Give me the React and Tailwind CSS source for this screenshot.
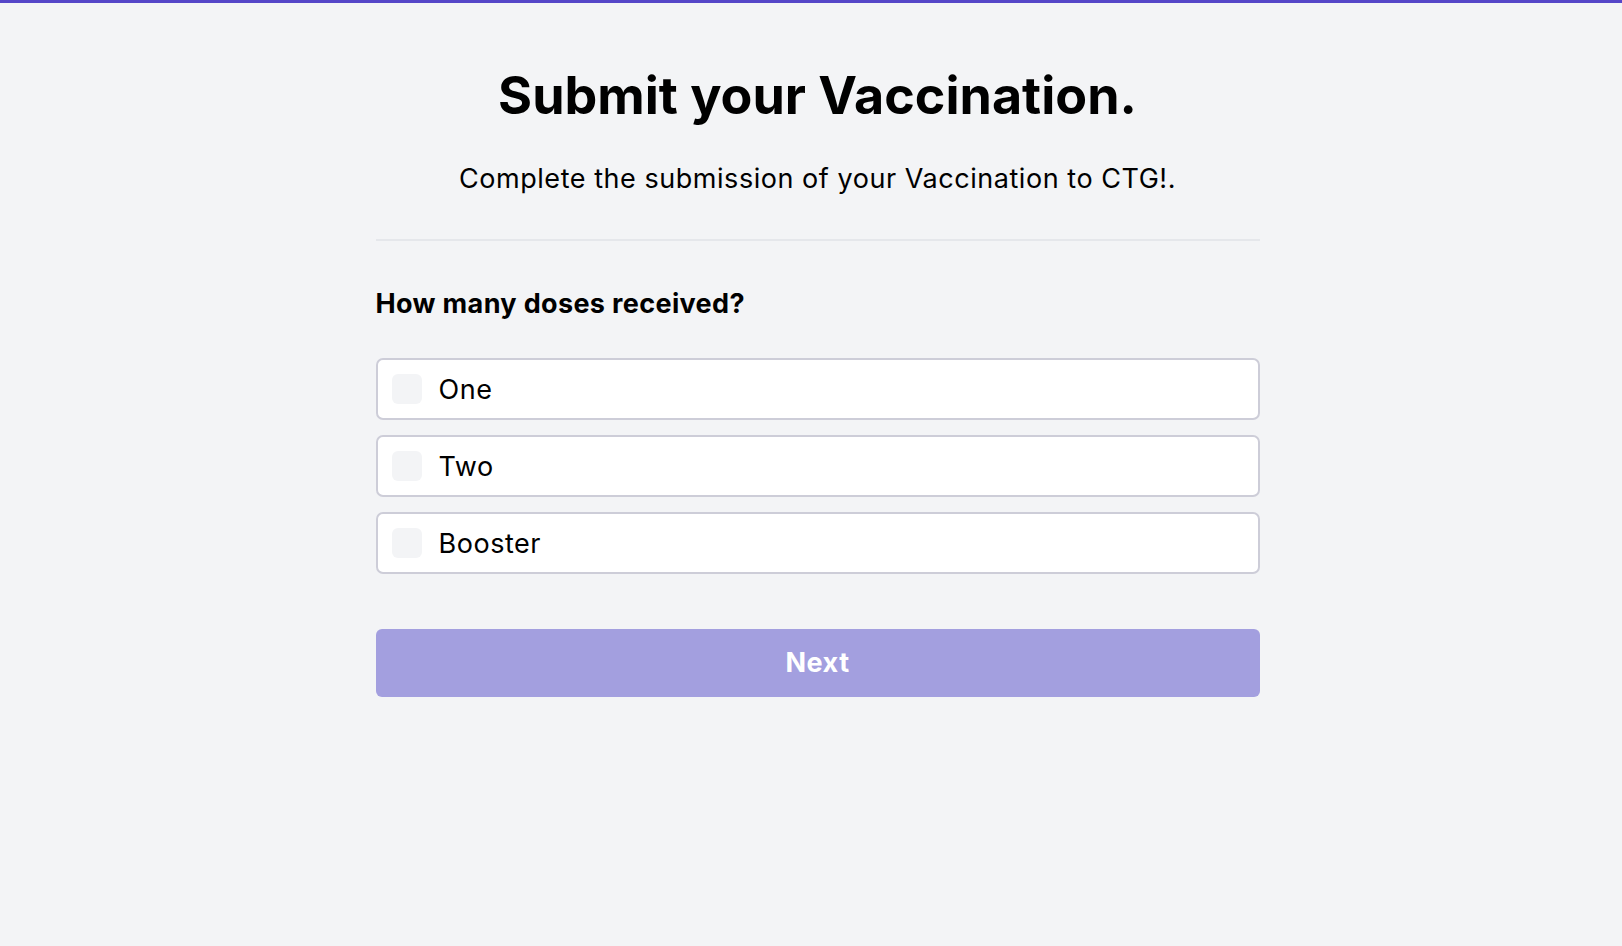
export default function App() {
  const options = ["One", "Two", "Booster"];
  return (
    <div
      className="min-h-screen bg-[#f3f4f6] border-t-[3px] border-[#5546c8] text-black"
      style={{ fontFamily: "Inter, 'Liberation Sans', sans-serif" }}
    >
      <div className="pl-[13px]">
        <div className="mx-auto w-[884px] flex flex-col">
          <h1 className="mt-[67px] text-center text-[52px] leading-none font-bold">
            Submit your Vaccination.
          </h1>
          <p className="mt-[43px] text-center text-[27px] leading-none tracking-[0.02em]">
            Complete the submission of your Vaccination to CTG!.
          </p>
          <div className="mt-[47px] h-[2px] bg-[#e5e7eb]" />
          <h2 className="mt-[49px] text-[27px] leading-none font-bold tracking-[0.013em]">
            How many doses received?
          </h2>
          <div className="mt-[41px] flex flex-col gap-[15px]">
            {options.map((o) => (
              <label
                key={o}
                className="h-[62px] flex items-center gap-[17px] pl-[14px] bg-white border-2 border-[#cdcdd8] rounded-[7px]"
              >
                <span className="w-[30px] h-[30px] rounded-[6px] bg-[#f3f4f6]" />
                <span className="text-[27px] leading-none tracking-[0.02em]">{o}</span>
              </label>
            ))}
          </div>
          <button className="mt-[55px] h-[68px] rounded-[6px] bg-[#a39fdf] text-white text-[27px] font-bold tracking-[0.02em]">
            Next
          </button>
        </div>
      </div>
    </div>
  );
}
